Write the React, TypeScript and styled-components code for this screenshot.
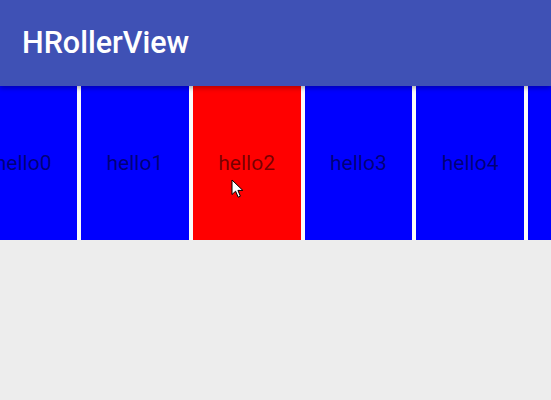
import React from "react";
import styled, { createGlobalStyle } from "styled-components";

const items = ["hello0", "hello1", "hello2", "hello3", "hello4", "hello5"];
const selected = 2;

export default function App() {
  return (
    <>
      <GlobalStyle />
      <Screen>
        <AppBar>
          <Title>HRollerView</Title>
        </AppBar>
        <Roller>
          <Track>
            {items.map((label, i) => (
              <Cell key={label} $active={i === selected}>
                <Label>{label}</Label>
              </Cell>
            ))}
          </Track>
        </Roller>
        <Pointer width="14" height="20" viewBox="0 0 14 20">
          <path
            d="M1 1 L1 15.5 L4.6 12.2 L7.2 18.2 L9.4 17.2 L6.9 11.4 L11.8 11.4 Z"
            fill="#fff"
            stroke="#000"
            strokeWidth="1"
            strokeLinejoin="round"
          />
        </Pointer>
      </Screen>
    </>
  );
}

const GlobalStyle = createGlobalStyle`
  html, body {
    margin: 0;
    padding: 0;
    background: #ededed;
  }
  body {
    font-family: Roboto, "Liberation Sans", sans-serif;
  }
`;

const Screen = styled.div`
  position: relative;
  width: 551px;
  height: 400px;
  overflow: hidden;
  background: #ededed;
`;

const AppBar = styled.header`
  position: relative;
  z-index: 1;
  height: 86px;
  display: flex;
  align-items: center;
  padding: 0 0 0 22px;
  box-sizing: border-box;
  background: #3f51b5;
  box-shadow: 0 2px 5px rgba(0, 0, 0, 0.3);
`;

const Title = styled.h1`
  margin: 0;
  padding-bottom: 1px;
  color: #fff;
  font-family: Roboto, "Liberation Sans", sans-serif;
  font-size: 30.5px;
  font-weight: 500;
  letter-spacing: 0;
`;

const Roller = styled.div`
  height: 154px;
  overflow: hidden;
  background: #fafafa;
`;

const Track = styled.div`
  display: flex;
  gap: 4px;
  height: 100%;
  margin-left: -30.75px;
`;

const Cell = styled.div<{ $active: boolean }>`
  flex: 0 0 107.75px;
  display: flex;
  align-items: center;
  justify-content: center;
  background: ${(p) => (p.$active ? "#ff0000" : "#0000ff")};
`;

const Label = styled.span`
  color: rgba(0, 0, 0, 0.54);
  font-size: 21px;
  font-family: Roboto, "Liberation Sans", sans-serif;
`;

const Pointer = styled.svg`
  position: absolute;
  left: 231px;
  top: 179px;
  z-index: 2;
`;
